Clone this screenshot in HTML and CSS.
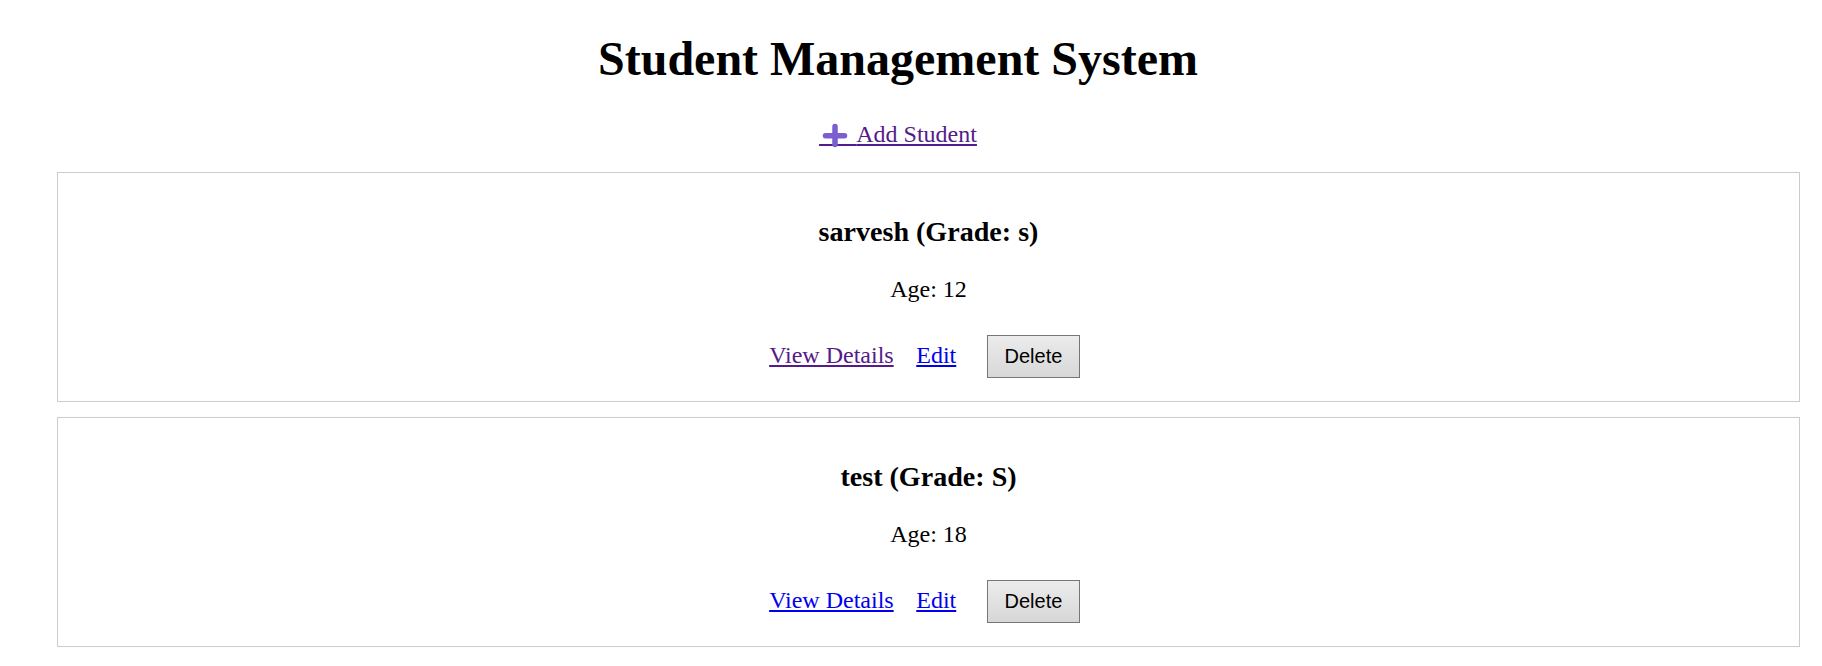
FILE: index.html
```html
<!DOCTYPE html>
<html lang="en">
<head>
<meta charset="utf-8">
<title>Student Management System</title>
<link rel="stylesheet" href="styles.css">
</head>
<body>
  <header class="page-header">
    <h1 class="title">Student Management System</h1>
    <p class="add-row"><a class="link link-visited" href="#add"><span class="plus">&nbsp;&nbsp;&nbsp;&nbsp;&nbsp;&nbsp;<svg class="plus-icon" width="26" height="26" viewBox="0 0 26 26" aria-hidden="true"><path d="M3.5 12.7H22.5M13 3.5V21.5" stroke="#7b5fcf" stroke-width="5.5" stroke-linecap="round" fill="none"/></svg></span>Add Student</a></p>
  </header>
  <main class="student-list">
    <div class="card">
      <h3 class="card-title">sarvesh (Grade: s)</h3>
      <p class="card-age">Age: 12</p>
      <div class="actions">
        <a class="link link-visited view-link" href="#view1">View Details</a>
        <a class="link edit-link" href="#edit1">Edit</a>
        <button class="delete-btn" type="button">Delete</button>
      </div>
    </div>
    <div class="card">
      <h3 class="card-title">test (Grade: S)</h3>
      <p class="card-age">Age: 18</p>
      <div class="actions">
        <a class="link view-link" href="#view2">View Details</a>
        <a class="link edit-link" href="#edit2">Edit</a>
        <button class="delete-btn" type="button">Delete</button>
      </div>
    </div>
  </main>
</body>
</html>
```

FILE: styles.css
```css
html, body {
  margin: 0;
  padding: 0;
  background: #ffffff;
  overflow: hidden;
}

body {
  font-family: "Liberation Serif", "Times New Roman", serif;
  font-size: 24px;
  color: #000000;
}

.page-header {
  padding: 31px 26px 0 0;
  text-align: center;
}

.title {
  margin: 0 0 35px;
  font-size: 48px;
  font-weight: bold;
  line-height: normal;
}

.add-row {
  margin: 0 0 24px;
  line-height: normal;
}

.link {
  color: #0000ee;
  text-decoration: underline;
}

.link-visited {
  color: #551a8b;
}

.plus {
  position: relative;
  letter-spacing: 0.2px;
}

.plus-icon {
  position: absolute;
  left: 2.5px;
  top: 1.5px;
}

.student-list {
  padding: 0 22px 0 57px;
}

.card {
  border: 1px solid #cccccc;
  padding: 15px 15px 16px;
  margin: 0 0 15px;
  text-align: center;
}

.card-title {
  margin: 28px 0;
  font-size: 28.08px;
  font-weight: bold;
  line-height: normal;
}

.card-age {
  margin: 0 0 24px;
  line-height: normal;
}

.actions {
  display: flex;
  justify-content: center;
  align-items: baseline;
}

.view-link {
  margin-right: 22.6px;
}

.edit-link {
  margin-right: 30.3px;
}

.delete-btn {
  margin: 7.5px 7.5px 7.5px 0;
  padding: 9px 17px;
  border: 1px solid #767676;
  border-radius: 0;
  background: linear-gradient(#ececec, #d7d7d7);
  color: #000000;
  font-family: "Liberation Sans", Arial, sans-serif;
  font-size: 20px;
  line-height: normal;
}
```
